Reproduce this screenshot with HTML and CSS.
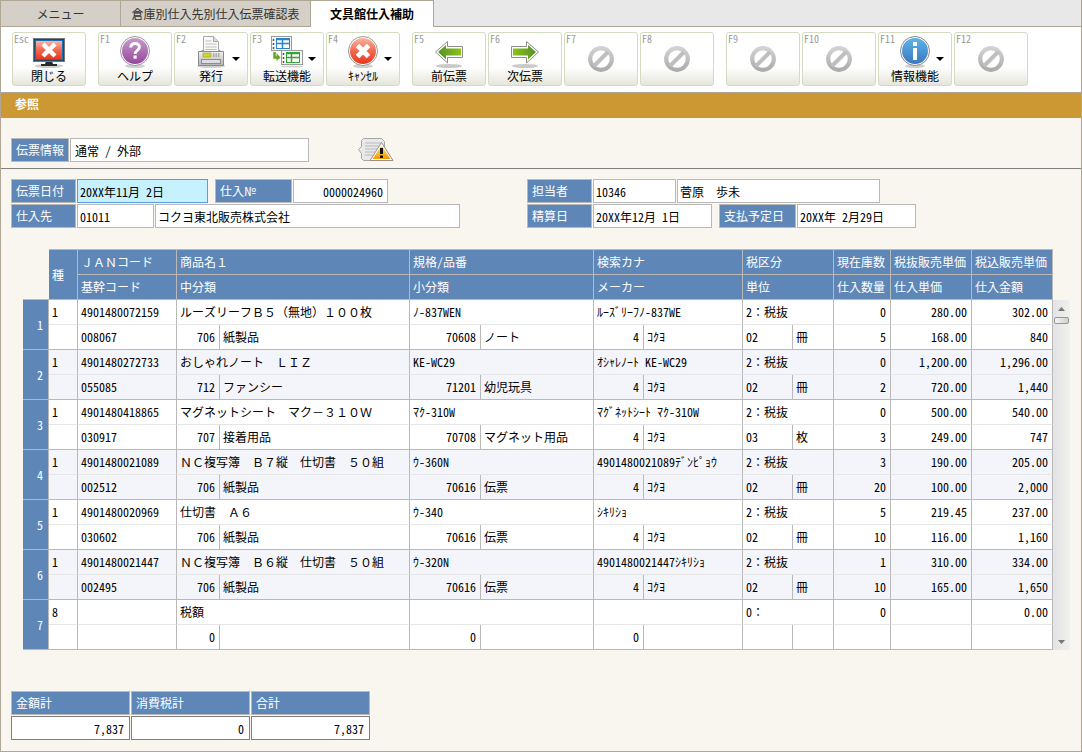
FILE: index.html
```html
<!DOCTYPE html>
<html lang="ja">
<head>
<meta charset="utf-8">
<title>文具館仕入補助</title>
<link rel="stylesheet" href="styles.css">
</head>
<body>
<svg class="defs" width="0" height="0" aria-hidden="true">
  <defs>
    <linearGradient id="g-red" x1="0" y1="0" x2="0" y2="1"><stop offset="0" stop-color="#f9b5a4"/><stop offset=".5" stop-color="#f0694f"/><stop offset="1" stop-color="#e8381c"/></linearGradient>
    <linearGradient id="g-purple" x1="0" y1="0" x2="0" y2="1"><stop offset="0" stop-color="#c79bcb"/><stop offset="1" stop-color="#96479a"/></linearGradient>
    <linearGradient id="g-blue" x1="0" y1="0" x2="0" y2="1"><stop offset="0" stop-color="#5db4e8"/><stop offset="1" stop-color="#3b78c0"/></linearGradient>
    <linearGradient id="g-green" x1="0" y1="0" x2="1" y2="0"><stop offset="0" stop-color="#55912a"/><stop offset="1" stop-color="#8ac416"/></linearGradient>
    <linearGradient id="g-gray" x1="0" y1="0" x2="0" y2="1"><stop offset="0" stop-color="#d2d2d2"/><stop offset="1" stop-color="#acacac"/></linearGradient>
    <linearGradient id="g-body" x1="0" y1="0" x2="0" y2="1"><stop offset="0" stop-color="#f2f2f2"/><stop offset="1" stop-color="#b4b4b4"/></linearGradient>
    <linearGradient id="g-warn" x1="0" y1="0" x2="0" y2="1"><stop offset="0" stop-color="#ffe27a"/><stop offset="1" stop-color="#f59a00"/></linearGradient>
    <symbol id="i-ban" viewBox="0 0 26 26">
      <circle cx="13" cy="13" r="10.8" fill="none" stroke="url(#g-gray)" stroke-width="4.2"/>
      <path d="M6 20 20 6" stroke="#bfbfbf" stroke-width="4"/>
    </symbol>
    <symbol id="i-arrow" viewBox="0 0 32 32">
      <ellipse cx="16" cy="30" rx="13" ry="2" fill="#c9c9c9"/>
      <path d="M2.500 16 14.500 5.500V10.500H29.500V21.500H14.500V27Z" fill="#fff" stroke="#8d8d8d"/>
      <path d="M5 16 13 9V12.500H28V19.500H13V23.500Z" fill="url(#g-green)"/>
    </symbol>
  </defs>
</svg>

<div class="app">
  <nav class="tabs">
    <button class="tab tab-menu" type="button">メニュー</button>
    <button class="tab tab-list" type="button">倉庫別仕入先別仕入伝票確認表</button>
    <button class="tab tab-active" type="button" aria-current="page">文具館仕入補助</button>
  </nav>

  <div class="toolbar">
    <div class="tool-group">
      <button class="tool" type="button"><span class="key">Esc</span>
        <svg class="icon" viewBox="0 0 32 32"><ellipse cx="16" cy="30" rx="14" ry="2" fill="#cfcfcf"/><path d="M13 25h6l1 3h4v2H8v-2h4z" fill="#2a2a2a"/><rect x=".5" y="2.500" width="31" height="23" fill="#222" stroke="#777"/><rect x="1.500" y="3.500" width="29" height="21" fill="#1b6fb8"/><rect x="3" y="5" width="26" height="18" fill="url(#g-red)"/><path d="M10 8l12 12M22 8 10 20" stroke="#fff" stroke-width="4.500"/></svg>
        <span class="tool-text">閉じる</span></button>
    </div>
    <div class="tool-group">
      <button class="tool" type="button"><span class="key">F1</span>
        <svg class="icon" viewBox="0 0 32 32"><ellipse cx="16" cy="30" rx="10" ry="2" fill="#cfcfcf"/><circle cx="16" cy="15" r="14.500" fill="#fff" stroke="#999"/><circle cx="16" cy="15" r="13" fill="url(#g-purple)"/><path d="M11.800 11.500c0-5.500 8.600-5.300 8.600-.4 0 3.400-4.200 3.200-4.200 6.900" fill="none" stroke="#fff" stroke-width="3"/><rect x="14.500" y="19.500" width="3.200" height="3.200" fill="#fff"/></svg>
        <span class="tool-text">ヘルプ</span></button>
      <button class="tool" type="button"><span class="key">F2</span>
        <svg class="icon" viewBox="0 0 32 32"><ellipse cx="16" cy="30" rx="14" ry="2" fill="#d2d2d2"/><path d="M7 14h18l2 3H5z" fill="#8e8e8e"/><path d="M8.500 16V.5h10l5 5V16z" fill="#fafafa" stroke="#a8a8a8"/><path d="M18.500.5v5h5" fill="#ddd" stroke="#a8a8a8"/><path d="M10.500 5h6M10.500 8h11M10.500 11h11M10.500 13.500h11" stroke="#bdbdbd"/><path d="M3.500 15.500h25v14h-25z" fill="url(#g-body)" stroke="#8a8a8a"/><rect x="8" y="17" width="8" height="4" fill="#d3d32a" stroke="#9b9b2a" stroke-width=".6"/><path d="M18 18h7M18 20h7" stroke="#777" stroke-dasharray="1.500 1"/><rect x="6.500" y="23.500" width="19" height="4" fill="#ddd" stroke="#8c8c8c"/></svg>
        <span class="tool-text">発行</span><span class="caret"></span></button>
      <button class="tool" type="button"><span class="key">F3</span>
        <svg class="icon" viewBox="0 0 32 32"><rect x=".5" y=".5" width="20" height="14" fill="#f6f6f6" stroke="#9a9a9a"/><path d="M2.500 3v2M2.500 7v2M2.500 11v2" stroke="#555" stroke-width="1.500"/><rect x="5.500" y="2.500" width="13" height="10" fill="#fff" stroke="#2b86c8"/><path d="M5 3.500h14M5 7.500h14M11.500 4v9" stroke="#2b86c8" stroke-width="1.500"/><rect x="10.500" y="14.500" width="21" height="14" fill="#f6f6f6" stroke="#9a9a9a"/><path d="M12.500 17v2M12.500 21v2M12.500 25v2" stroke="#555" stroke-width="1.500"/><rect x="15.500" y="16.500" width="13" height="10" fill="#fff" stroke="#35a336"/><path d="M15 17.500h14M15 21.500h14M20.500 18v9" stroke="#35a336" stroke-width="1.500"/><path d="M3.500 16v5.500h3" fill="none" stroke="#6aa51d" stroke-width="2.500"/><path d="M5.500 17l4 4.500-4 3.500z" fill="#6aa51d"/><ellipse cx="21" cy="30.500" rx="11" ry="1" fill="#d2d2d2"/></svg>
        <span class="tool-text">転送機能</span><span class="caret"></span></button>
      <button class="tool" type="button"><span class="key">F4</span>
        <svg class="icon" viewBox="0 0 32 32"><ellipse cx="16" cy="30" rx="10" ry="2" fill="#cfcfcf"/><circle cx="16" cy="15" r="14.500" fill="#fff" stroke="#999"/><circle cx="16" cy="15" r="13" fill="url(#g-red)"/><path d="M10.500 9.500l11 11M21.500 9.500l-11 11" stroke="#fff" stroke-width="5"/></svg>
        <span class="tool-text">ｷｬﾝｾﾙ</span><span class="caret"></span></button>
    </div>
    <div class="tool-group">
      <button class="tool" type="button"><span class="key">F5</span>
        <svg class="icon"><use href="#i-arrow"/></svg>
        <span class="tool-text">前伝票</span></button>
      <button class="tool" type="button"><span class="key">F6</span>
        <svg class="icon flip"><use href="#i-arrow"/></svg>
        <span class="tool-text">次伝票</span></button>
      <button class="tool tool-off" type="button" aria-disabled="true"><span class="key">F7</span><svg class="ban"><use href="#i-ban"/></svg></button>
      <button class="tool tool-off" type="button" aria-disabled="true"><span class="key">F8</span><svg class="ban"><use href="#i-ban"/></svg></button>
    </div>
    <div class="tool-group">
      <button class="tool tool-off" type="button" aria-disabled="true"><span class="key">F9</span><svg class="ban"><use href="#i-ban"/></svg></button>
      <button class="tool tool-off" type="button" aria-disabled="true"><span class="key">F10</span><svg class="ban"><use href="#i-ban"/></svg></button>
      <button class="tool" type="button"><span class="key">F11</span>
        <svg class="icon" viewBox="0 0 32 32"><ellipse cx="16" cy="30" rx="10" ry="2" fill="#cfcfcf"/><circle cx="16" cy="15" r="14.500" fill="#fff" stroke="#888"/><circle cx="16" cy="15" r="13" fill="url(#g-blue)"/><rect x="14" y="6" width="4" height="4" fill="#fff"/><rect x="14" y="12" width="4" height="12" fill="#fff"/></svg>
        <span class="tool-text">情報機能</span><span class="caret"></span></button>
      <button class="tool tool-off" type="button" aria-disabled="true"><span class="key">F12</span><svg class="ban"><use href="#i-ban"/></svg></button>
    </div>
  </div>

  <h1 class="mode">参照</h1>

  <div class="slip-info">
    <label class="label w-info" for="info">伝票情報</label>
    <input class="field w-info-value pad-wide" id="info" value="通常 / 外部" readonly>
    <svg class="notice" viewBox="0 0 36 24" role="img" aria-label="注意"><path d="M5.500.5h18l3 3v19h-21l-2-2v-5L.5 11.500l3-3v-6z" fill="#e9e9e9" stroke="#a5a5a5"/><path d="M7 5h16M7 8h14M7 11h12M7 14h10M7 17h8" stroke="#b9b9b9"/><path d="M23.500 4.500 35 22.500H12z" fill="#fff" stroke="#9a8f83"/><path d="M23.500 7.500 32.500 21H14.500z" fill="url(#g-warn)"/><path d="M22 10h3v6h-3zM22 17.500h3v2.500h-3z" fill="#111"/></svg>
  </div>

  <div class="header-form">
    <div class="form-line">
      <label class="label w-label" for="date">伝票日付</label>
      <input class="field field-focus w-date" id="date" value="20XX年11月 2日" readonly>
      <label class="label label-next w-label-wide" for="no">仕入№</label>
      <input class="field num w-no" id="no" value="0000024960" readonly>
    </div>
    <div class="form-line">
      <label class="label w-label" for="staff">担当者</label>
      <input class="field w-code-wide" id="staff" value="10346" readonly>
      <input class="field w-staff" aria-label="担当者名" value="菅原　歩未" readonly>
    </div>
    <div class="form-line">
      <label class="label w-label" for="supplier">仕入先</label>
      <input class="field w-code" id="supplier" value="01011" readonly>
      <input class="field w-supplier" aria-label="仕入先名" value="コクヨ東北販売株式会社" readonly>
    </div>
    <div class="form-line">
      <label class="label w-label" for="closing">精算日</label>
      <input class="field w-day" id="closing" value="20XX年12月 1日" readonly>
      <label class="label label-next w-label-wide" for="payment">支払予定日</label>
      <input class="field w-day" id="payment" value="20XX年 2月29日" readonly>
    </div>
  </div>

  <div class="grid-area">
    <table class="grid">
      <colgroup>
        <col class="c-row"><col class="c-kind"><col class="c-code"><col class="c-mid-code"><col class="c-name"><col class="c-small-code"><col class="c-small-name"><col class="c-maker-code"><col class="c-maker"><col class="c-unit-code"><col class="c-unit"><col class="c-qty"><col class="c-price"><col class="c-price">
      </colgroup>
      <thead>
        <tr><td class="corner" rowspan="2"></td><th rowspan="2">種</th><th>ＪＡＮコード</th><th colspan="2">商品名１</th><th colspan="2">規格/品番</th><th colspan="2">検索カナ</th><th colspan="2">税区分</th><th>現在庫数</th><th>税抜販売単価</th><th>税込販売単価</th></tr>
        <tr><th>基幹コード</th><th colspan="2">中分類</th><th colspan="2">小分類</th><th colspan="2">メーカー</th><th colspan="2">単位</th><th>仕入数量</th><th>仕入単価</th><th>仕入金額</th></tr>
      </thead>
      <tbody>
        <tr><th rowspan="2">1</th><td>1</td><td>4901480072159</td><td colspan="2">ルーズリーフＢ５（無地）１００枚</td><td colspan="2">ﾉ-837WEN</td><td colspan="2">ﾙｰｽﾞﾘｰﾌﾉ-837WE</td><td colspan="2">2：税抜</td><td class="num">0</td><td class="num">280.00</td><td class="num">302.00</td></tr>
        <tr><td></td><td>008067</td><td class="num">706</td><td>紙製品</td><td class="num">70608</td><td>ノート</td><td class="num">4</td><td>ｺｸﾖ</td><td>02</td><td>冊</td><td class="num">5</td><td class="num">168.00</td><td class="num">840</td></tr>
      </tbody>
      <tbody>
        <tr><th rowspan="2">2</th><td>1</td><td>4901480272733</td><td colspan="2">おしゃれノート　ＬＩＺ</td><td colspan="2">KE-WC29</td><td colspan="2">ｵｼｬﾚﾉｰﾄ KE-WC29</td><td colspan="2">2：税抜</td><td class="num">0</td><td class="num">1,200.00</td><td class="num">1,296.00</td></tr>
        <tr><td></td><td>055085</td><td class="num">712</td><td>ファンシー</td><td class="num">71201</td><td>幼児玩具</td><td class="num">4</td><td>ｺｸﾖ</td><td>02</td><td>冊</td><td class="num">2</td><td class="num">720.00</td><td class="num">1,440</td></tr>
      </tbody>
      <tbody>
        <tr><th rowspan="2">3</th><td>1</td><td>4901480418865</td><td colspan="2">マグネットシート　マク－３１０Ｗ</td><td colspan="2">ﾏｸ-310W</td><td colspan="2">ﾏｸﾞﾈｯﾄｼｰﾄ ﾏｸ-310W</td><td colspan="2">2：税抜</td><td class="num">0</td><td class="num">500.00</td><td class="num">540.00</td></tr>
        <tr><td></td><td>030917</td><td class="num">707</td><td>接着用品</td><td class="num">70708</td><td>マグネット用品</td><td class="num">4</td><td>ｺｸﾖ</td><td>03</td><td>枚</td><td class="num">3</td><td class="num">249.00</td><td class="num">747</td></tr>
      </tbody>
      <tbody>
        <tr><th rowspan="2">4</th><td>1</td><td>4901480021089</td><td colspan="2">ＮＣ複写簿　Ｂ７縦　仕切書　５０組</td><td colspan="2">ｳ-360N</td><td colspan="2">4901480021089ﾃﾞﾝﾋﾟｮｳ</td><td colspan="2">2：税抜</td><td class="num">3</td><td class="num">190.00</td><td class="num">205.00</td></tr>
        <tr><td></td><td>002512</td><td class="num">706</td><td>紙製品</td><td class="num">70616</td><td>伝票</td><td class="num">4</td><td>ｺｸﾖ</td><td>02</td><td>冊</td><td class="num">20</td><td class="num">100.00</td><td class="num">2,000</td></tr>
      </tbody>
      <tbody>
        <tr><th rowspan="2">5</th><td>1</td><td>4901480020969</td><td colspan="2">仕切書　Ａ６</td><td colspan="2">ｳ-340</td><td colspan="2">ｼｷﾘｼｮ</td><td colspan="2">2：税抜</td><td class="num">5</td><td class="num">219.45</td><td class="num">237.00</td></tr>
        <tr><td></td><td>030602</td><td class="num">706</td><td>紙製品</td><td class="num">70616</td><td>伝票</td><td class="num">4</td><td>ｺｸﾖ</td><td>02</td><td>冊</td><td class="num">10</td><td class="num">116.00</td><td class="num">1,160</td></tr>
      </tbody>
      <tbody>
        <tr><th rowspan="2">6</th><td>1</td><td>4901480021447</td><td colspan="2">ＮＣ複写簿　Ｂ６縦　仕切書　５０組</td><td colspan="2">ｳ-320N</td><td colspan="2">4901480021447ｼｷﾘｼｮ</td><td colspan="2">2：税抜</td><td class="num">1</td><td class="num">310.00</td><td class="num">334.00</td></tr>
        <tr><td></td><td>002495</td><td class="num">706</td><td>紙製品</td><td class="num">70616</td><td>伝票</td><td class="num">4</td><td>ｺｸﾖ</td><td>02</td><td>冊</td><td class="num">10</td><td class="num">165.00</td><td class="num">1,650</td></tr>
      </tbody>
      <tbody>
        <tr><th rowspan="2">7</th><td>8</td><td></td><td colspan="2">税額</td><td colspan="2"></td><td colspan="2"></td><td colspan="2">0：</td><td class="num">0</td><td></td><td class="num">0.00</td></tr>
        <tr><td></td><td></td><td class="num">0</td><td></td><td class="num">0</td><td></td><td class="num">0</td><td></td><td></td><td></td><td></td><td></td><td></td></tr>
      </tbody>
    </table>
    <div class="scroller">
      <button class="scroll-btn" type="button" aria-label="上へ"><svg width="7" height="4" viewBox="0 0 7 4"><path d="M0 4 3.500 0 7 4z" fill="#777"/></svg></button>
      <div class="scroll-track"><div class="scroll-thumb"></div></div>
      <button class="scroll-btn" type="button" aria-label="下へ"><svg width="7" height="4" viewBox="0 0 7 4"><path d="M0 0 3.500 4 7 0z" fill="#777"/></svg></button>
    </div>
  </div>

  <div class="totals">
    <div class="total"><label class="label" for="sum">金額計</label><input class="field num" id="sum" value="7,837" readonly></div>
    <div class="total"><label class="label" for="tax">消費税計</label><input class="field num" id="tax" value="0" readonly></div>
    <div class="total"><label class="label" for="all">合計</label><input class="field num" id="all" value="7,837" readonly></div>
  </div>
</div>
</body>
</html>
```

FILE: styles.css
```css
* { box-sizing: border-box; }

body {
  margin: 0;
  background: #f9f6ef;
  color: #000;
  font: 12px/16px "Noto Sans Mono CJK JP", "Noto Sans CJK JP", monospace;
}

button, input {
  margin: 0;
  color: inherit;
  font: inherit;
}

.defs { position: absolute; }

.app {
  display: flex;
  flex-direction: column;
  min-height: 100vh;
  border: 1px solid #b0a695;
  border-top: 0;
}

/* Tabs */
.tabs {
  display: flex;
  height: 27px;
  background: linear-gradient(#b0a695, #b0a695) bottom / 100% 1px no-repeat #e8e8e8;
}

.tab {
  padding: 0;
  border: 1px solid #b0a695;
  border-left: 0;
  background: #d4d0c8;
  color: #333;
  font-family: "Noto Sans CJK JP", sans-serif;
  white-space: nowrap;
}

.tab-menu { width: 120px; }
.tab-list { width: 190px; }

.tab-active {
  width: 123px;
  border-bottom: 0;
  background: #fff;
  color: #000;
  font-weight: bold;
}

/* Toolbar */
.toolbar {
  display: flex;
  flex-wrap: wrap;
  gap: 12px;
  padding: 5px 11px 6px;
  border-bottom: 1px solid #b0a695;
  background: #fff;
}

.tool-group { display: flex; gap: 2px; }

.tool {
  position: relative;
  display: flex;
  flex-direction: column;
  align-items: center;
  width: 74px;
  height: 54px;
  padding: 3px 0 0;
  border: 1px solid #d3dcc0;
  border-radius: 3px;
  background: linear-gradient(#fff 65%, #e6e5dc);
  white-space: nowrap;
}

.tool-off { justify-content: center; padding: 0; }

.key {
  position: absolute;
  top: 0;
  left: 1px;
  color: #999;
  font-size: 10px;
  line-height: 12px;
}

.icon { width: 32px; height: 32px; }
.flip { transform: scaleX(-1); }
.ban { width: 26px; height: 26px; }

.caret {
  position: absolute;
  top: 24px;
  right: 7px;
  border: solid transparent;
  border-width: 4px 4px 0;
  border-top-color: #000;
}

.mode {
  margin: 0;
  padding: 3px 14px 6px;
  background: #cb9833;
  color: #fff;
  font: bold 12px/16px "Noto Sans CJK JP", sans-serif;
}

/* Labels and fields */
.label {
  height: 24px;
  padding: 0 4px;
  border: 1px solid #b9b9b9;
  background: #5e87b8;
  color: #fff;
  line-height: 22px;
  white-space: nowrap;
}

.field {
  min-width: 0;
  height: 24px;
  padding: 0 2px;
  border: 1px solid #b9b9b9;
  border-radius: 0;
  background: #fff;
}

.field.num { padding-right: 4px; }
.pad-wide { padding: 0 4px; }
.field-focus { border-color: #5b9be0; background: #c6f1ff; }
.num { text-align: right; }

.slip-info {
  display: flex;
  gap: 1px;
  padding: 20px 10px 6px;
  border-bottom: 1px solid #808080;
}

.notice { width: 36px; height: 24px; margin-left: 48px; }

.header-form {
  display: grid;
  grid-template-columns: 516px 1fr;
  gap: 1px 0;
  padding: 10px 10px 0;
}

.form-line { display: flex; gap: 1px; }
.label-next { margin-left: 6px; }

.w-info { width: 58px; }
.w-info-value { width: 239px; }
.w-label { width: 65px; }
.w-label-wide { width: 77px; }
.w-date { width: 131px; }
.w-no { width: 95px; }
.w-code { width: 77px; }
.w-code-wide { width: 83px; }
.w-staff { width: 203px; }
.w-supplier { width: 305px; }
.w-day { width: 119px; }

/* Detail grid */
.grid-area {
  display: flex;
  padding: 21px 11px 0 22px;
}

.grid {
  flex: 1;
  width: 100%;
  border-spacing: 0;
  table-layout: fixed;
}

.c-row { width: 26px; }
.c-kind { width: 29px; }
.c-code { width: 99px; }
.c-mid-code { width: 43px; }
.c-small-code { width: 71px; }
.c-small-name { width: 113px; }
.c-maker-code { width: 50px; }
.c-maker { width: 99px; }
.c-unit-code { width: 50px; }
.c-unit { width: 41px; }
.c-qty { width: 57px; }
.c-price { width: 81px; }

.grid th,
.grid td {
  height: 25px;
  padding: 0 0 0 3px;
  border: solid #b9b9b9;
  border-width: 0 1px 1px 0;
  background: #fff;
  font-weight: normal;
  text-align: left;
  white-space: nowrap;
}

.grid th { background: #5e87b8; color: #fff; }
.grid thead tr:first-child th { height: 26px; border-top-width: 1px; }
.grid .corner { border-right: 0; background: none; }
.grid tbody th { padding-right: 5px; text-align: right; }
.grid tbody tr:first-child td { border-bottom-color: #e6e6e6; }
.grid tbody:nth-of-type(even) td { background: #f4f5fa; }
.grid td.num { padding: 0 4px 0 0; text-align: right; }

.scroller {
  display: flex;
  flex-direction: column;
  width: 17px;
  margin-top: 51px;
  background: linear-gradient(90deg, #e3e3e3, #f0f0f0);
}

.scroll-btn {
  display: flex;
  align-items: center;
  justify-content: center;
  height: 17px;
  padding: 0;
  border: 0;
  background: none;
}

.scroll-track { flex: 1; }

.scroll-thumb {
  height: 7px;
  margin: 0 1px;
  border: 1px solid #979797;
  border-radius: 2px;
  background: linear-gradient(90deg, #f5f5f5, #d0d0d0);
}

/* Totals */
.totals {
  display: flex;
  gap: 1px;
  padding: 41px 10px 11px;
}

.total {
  display: grid;
  gap: 1px;
  width: 119px;
}

.total .field { border-color: #808080; padding-right: 5px; }
```
